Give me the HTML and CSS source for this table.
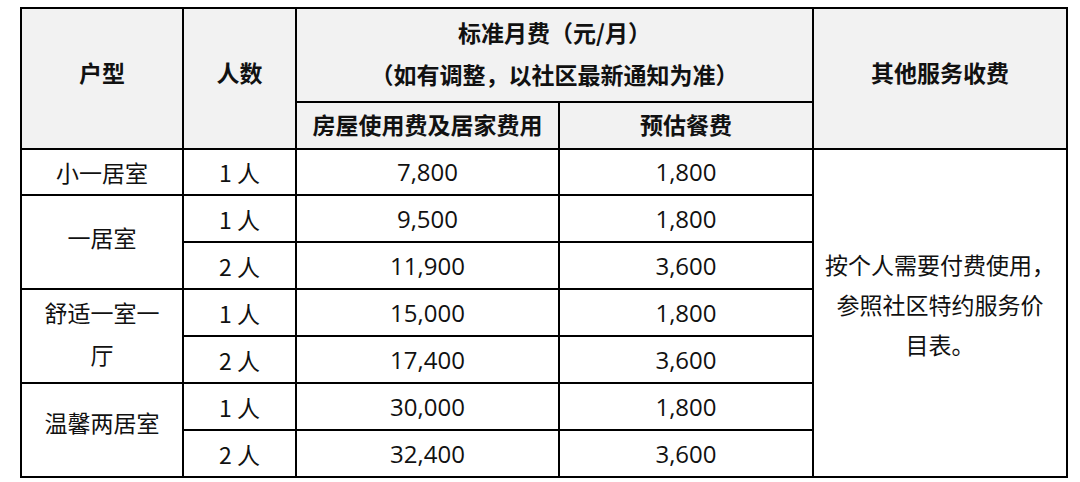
FILE: index.html
```html
<!DOCTYPE html>
<html lang="zh-CN">
<head>
<meta charset="utf-8">
<title>标准月费</title>
<link rel="stylesheet" href="styles.css">
</head>
<body>
<div class="wrap">
<table class="fees">
  <colgroup>
    <col class="c1"><col class="c2"><col class="c3"><col class="c4"><col class="c5">
  </colgroup>
  <thead>
    <tr class="h1">
      <th rowspan="2" class="span-h">户型</th>
      <th rowspan="2" class="span-h">人数</th>
      <th colspan="2" class="title">标准月费（元/月）<br>（如有调整，以社区最新通知为准）</th>
      <th rowspan="2" class="span-h">其他服务收费</th>
    </tr>
    <tr class="h2">
      <th>房屋使用费及居家费用</th>
      <th>预估餐费</th>
    </tr>
  </thead>
  <tbody>
    <tr class="first">
      <td class="type">小一居室</td>
      <td>1 人</td>
      <td class="num">7,800</td>
      <td class="num">1,800</td>
      <td rowspan="7" class="other">按个人需要付费使用，<br>参照社区特约服务价<br>目表。</td>
    </tr>
    <tr>
      <td rowspan="2" class="type multi">一居室</td>
      <td>1 人</td>
      <td class="num">9,500</td>
      <td class="num">1,800</td>
    </tr>
    <tr>
      <td>2 人</td>
      <td class="num">11,900</td>
      <td class="num">3,600</td>
    </tr>
    <tr>
      <td rowspan="2" class="type multi wrapped">舒适一室一厅</td>
      <td>1 人</td>
      <td class="num">15,000</td>
      <td class="num">1,800</td>
    </tr>
    <tr>
      <td>2 人</td>
      <td class="num">17,400</td>
      <td class="num">3,600</td>
    </tr>
    <tr>
      <td rowspan="2" class="type multi last">温馨两居室</td>
      <td>1 人</td>
      <td class="num">30,000</td>
      <td class="num">1,800</td>
    </tr>
    <tr>
      <td>2 人</td>
      <td class="num">32,400</td>
      <td class="num">3,600</td>
    </tr>
  </tbody>
</table>
</div>
</body>
</html>
```

FILE: styles.css
```css
html, body {
  margin: 0;
  padding: 0;
  background: #ffffff;
}

.wrap {
  padding: 7px 0 0 20px;
}

.fees {
  table-layout: fixed;
  width: 1048px;
  border-collapse: separate;
  border-spacing: 0;
  border-top: 2px solid #000;
  border-left: 2px solid #000;
  font-family: "Open Sans", "Noto Sans CJK SC", sans-serif;
  font-size: 23px;
  color: #111;
}

.c1 { width: 162px; }
.c2 { width: 113px; }
.c3 { width: 263px; }
.c4 { width: 254px; }
.c5 { width: 254px; }

.fees th,
.fees td {
  border-right: 2px solid #000;
  border-bottom: 2px solid #000;
  padding: 0;
  text-align: center;
  vertical-align: middle;
  box-sizing: border-box;
  line-height: 42px;
}

.fees th {
  background: #f2f2f2;
  font-family: "Noto Sans CJK SC", sans-serif;
  font-weight: 700;
}

.h1 th { height: 94px; }
.h2 th { height: 46px; }

.fees th.span-h {
  padding-bottom: 14px;
}

.fees th.title {
  line-height: 42px;
  padding-bottom: 4px;
}

.fees .h2 th {
  padding-bottom: 3px;
}

.fees td {
  height: 47px;
  font-family: "Noto Sans CJK SC", sans-serif;
}

.fees tr.first td.type,
.fees tr.first td:nth-child(2),
.fees tr.first td.num {
  height: 46px;
}

.fees td.num {
  font-family: "Open Sans", sans-serif;
  font-size: 24px;
}

.fees td.type {
  padding: 0 16px;
}

.fees td.type.multi {
  padding-bottom: 10px;
}

.fees td.type.multi.wrapped {
  padding-bottom: 6px;
}

.fees td.type.multi.last {
  padding-bottom: 16px;
}

.fees td.other {
  line-height: 40px;
  padding-bottom: 18px;
}
```
